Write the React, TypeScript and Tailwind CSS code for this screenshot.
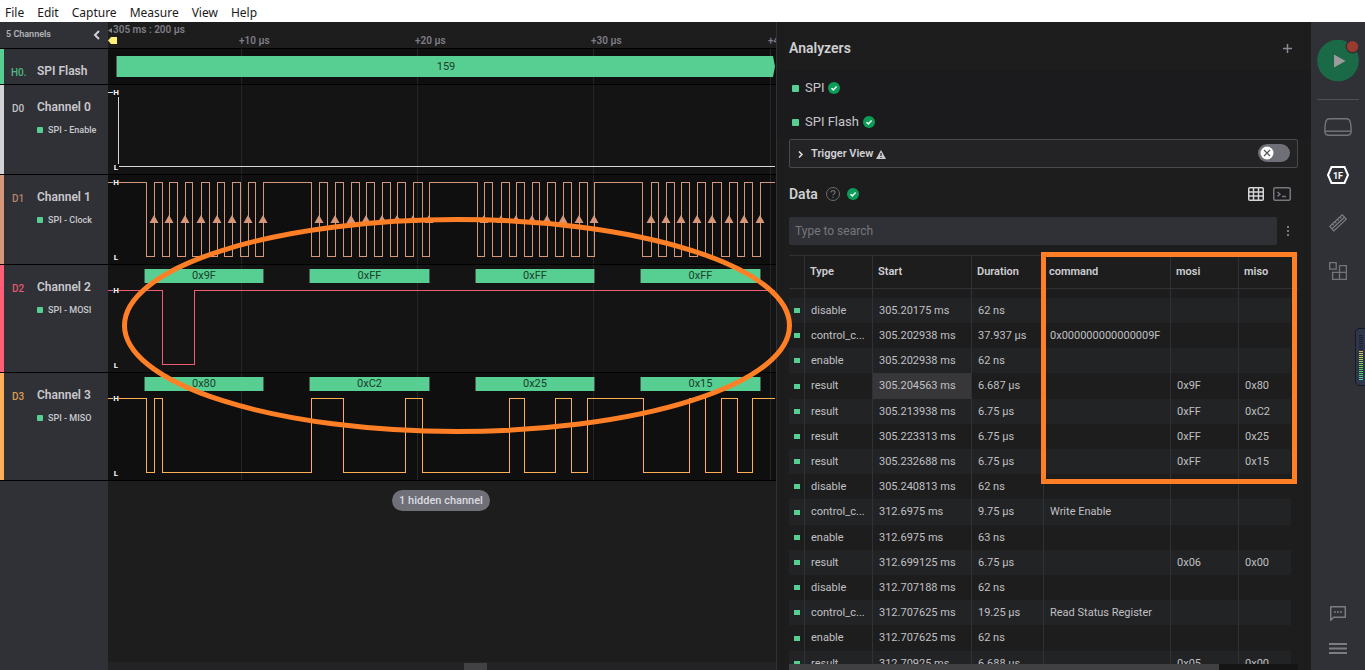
import { useState } from 'react'
import type { ReactNode } from 'react'
import clsx from 'clsx'

type Frame = { from: number; to: number; label: string }

type Channel = {
  id: string
  name: string
  signal: string
  row: string
  stripe: string
  idColor: string
  stroke: string
  high: number
  edges: number[]
  frames?: string[]
  arrows?: boolean
}

// Signals idle high, so every even edge is a fall and every odd edge a rise
const CLOCK = [
  38, 46, 54, 61, 69, 77, 84, 93, 101, 109, 116, 124, 132, 140, 147, 155,
  203, 211, 219, 227, 235, 243, 251, 258, 266, 274, 282, 289, 297, 305, 314, 321,
  369, 376, 384, 393, 401, 408, 416, 424, 431, 439, 447, 455, 463, 471, 479, 486,
  534, 543, 550, 558, 566, 573, 581, 589, 597, 604, 613, 621, 629, 636, 644, 652,
]

const MISO = [
  38, 46, 54, 203, 235, 297, 314, 401, 416, 447, 463, 479, 535, 581, 597, 613, 629, 644,
]

const FRAME_SPANS = [
  [37, 155],
  [202, 321],
  [368, 486],
  [533, 652],
]

const TICKS = [
  { x: 133, label: '+10 µs' },
  { x: 309, label: '+20 µs' },
  { x: 485, label: '+30 µs' },
  { x: 662, label: '+4' },
]

const channels: Channel[] = [
  {
    id: 'D0',
    name: 'Channel 0',
    signal: 'SPI - Enable',
    row: 'h-[90px] bg-[#141414]',
    stripe: 'bg-[#d3d3d5]',
    idColor: 'text-[#c4c4c8]',
    stroke: '#d8d8d8',
    high: 7,
    edges: [10],
  },
  {
    id: 'D1',
    name: 'Channel 1',
    signal: 'SPI - Clock',
    row: 'h-[90px] bg-[#0f0f0f]',
    stripe: 'bg-[#d6967a]',
    idColor: 'text-[#b9836c]',
    stroke: '#d6967a',
    high: 7,
    edges: CLOCK,
    arrows: true,
  },
  {
    id: 'D2',
    name: 'Channel 2',
    signal: 'SPI - MOSI',
    row: 'h-[108px] bg-[#141414]',
    stripe: 'bg-[#ff5f77]',
    idColor: 'text-[#e0596d]',
    stroke: '#f25c72',
    high: 25,
    edges: [54, 86],
    frames: ['0x9F', '0xFF', '0xFF', '0xFF'],
  },
  {
    id: 'D3',
    name: 'Channel 3',
    signal: 'SPI - MISO',
    row: 'h-[108px] bg-[#0f0f0f]',
    stripe: 'bg-[#ffb056]',
    idColor: 'text-[#dd9b50]',
    stroke: '#ffb056',
    high: 25,
    edges: MISO,
    frames: ['0x80', '0xC2', '0x25', '0x15'],
  },
]

const rows = [
  ['disable', '305.20175 ms', '62 ns', '', '', ''],
  ['control_c...', '305.202938 ms', '37.937 µs', '0x000000000000009F', '', ''],
  ['enable', '305.202938 ms', '62 ns', '', '', ''],
  ['result', '305.204563 ms', '6.687 µs', '', '0x9F', '0x80'],
  ['result', '305.213938 ms', '6.75 µs', '', '0xFF', '0xC2'],
  ['result', '305.223313 ms', '6.75 µs', '', '0xFF', '0x25'],
  ['result', '305.232688 ms', '6.75 µs', '', '0xFF', '0x15'],
  ['disable', '305.240813 ms', '62 ns', '', '', ''],
  ['control_c...', '312.6975 ms', '9.75 µs', 'Write Enable', '', ''],
  ['enable', '312.6975 ms', '63 ns', '', '', ''],
  ['result', '312.699125 ms', '6.75 µs', '', '0x06', '0x00'],
  ['disable', '312.707188 ms', '62 ns', '', '', ''],
  ['control_c...', '312.707625 ms', '19.25 µs', 'Read Status Register', '', ''],
  ['enable', '312.707625 ms', '62 ns', '', '', ''],
  ['result', '312.70925 ms', '6.688 µs', '', '0x05', '0x00'],
]

function wavePath(edges: number[], high: number) {
  const low = high + 74
  let d = `M0 ${high + 0.5}`
  edges.forEach((x, i) => {
    d += `H${x + 0.5}V${(i % 2 === 0 ? low : high) + 0.5}`
  })
  return d + 'H2000'
}

function MenuBar() {
  return (
    <header className="flex h-[22px] shrink-0 items-center gap-[13px] bg-white pt-1 pl-[5px] font-['Noto_Sans',sans-serif] text-[12px] text-[#1a1a1a]">
      {['File', 'Edit', 'Capture', 'Measure', 'View', 'Help'].map((item) => (
        <button key={item} type="button">
          {item}
        </button>
      ))}
    </header>
  )
}

function GridLines() {
  return (
    <>
      {TICKS.map(({ x }) => (
        <line key={x} x1={x + 0.5} x2={x + 0.5} y1="0" y2="120" stroke="#262628" />
      ))}
    </>
  )
}

function Decoded({ from, to, label }: Frame) {
  return (
    <div
      className="absolute top-1 h-3.5 border-x border-[#4a5a52] bg-[#57cf92] text-center text-[11px] leading-[14px] text-[#1b3d2b]"
      style={{ left: from - 1, width: to - from + 2 }}
    >
      {label}
    </div>
  )
}

function Level({ children, top }: { children: ReactNode; top: number }) {
  return (
    <span
      className="absolute left-[5px] w-1.5 bg-[#111] text-center text-[8px] leading-[8px] font-bold text-white"
      style={{ top }}
    >
      {children}
    </span>
  )
}

function Track({ channel }: { channel: Channel }) {
  const { edges, high, stroke, frames, arrows } = channel
  return (
    <div className="relative mr-px min-w-0 flex-1 overflow-hidden">
      <svg className="h-full w-full" shapeRendering="crispEdges">
        <GridLines />
        <path d={wavePath(edges, high)} fill="none" stroke={stroke} />
        {arrows &&
          edges
            .filter((_, i) => i % 2 === 1)
            .map((x) => (
              <path key={x} d={`M${x} 40l4.500 8h-9z`} fill={stroke} shapeRendering="auto" />
            ))}
      </svg>
      {frames?.map((label, i) => (
        <Decoded key={i} from={FRAME_SPANS[i][0]} to={FRAME_SPANS[i][1]} label={label} />
      ))}
      <Level top={high - 3}>H</Level>
      <Level top={high + 72}>L</Level>
    </div>
  )
}

function ChannelRow({ channel }: { channel: Channel }) {
  return (
    <div className={clsx('flex border-b border-black', channel.row)}>
      <div className="flex w-[108px] shrink-0 bg-[#303136]">
        <div className={clsx('w-1', channel.stripe)} />
        <div className={clsx('w-[33px] pt-[16px] pl-2 text-[10px] leading-4 font-medium', channel.idColor)}>
          {channel.id}
        </div>
        <div className="pt-[14px]">
          <div className="text-[12px] leading-4 font-semibold text-[#c9c9cd]">{channel.name}</div>
          <div className="mt-[7px] flex items-center gap-[5px] text-[9px] leading-4 font-medium whitespace-nowrap text-[#c9c9cd]">
            <span className="size-1.5 rounded-[1px] bg-[#57cf92]" />
            {channel.signal}
          </div>
        </div>
      </div>
      <Track channel={channel} />
    </div>
  )
}

function Waveforms() {
  return (
    <section className="flex min-w-0 flex-1 flex-col border-r border-[#303136]">
      {/* Time ruler */}
      <div className="flex h-[27px] shrink-0 border-b border-black">
        <div className="flex w-[108px] shrink-0 items-center justify-between bg-[#303136] pr-2 pl-1.5 text-[9px] font-semibold text-[#b4b4b9]">
          5 Channels
          <button type="button" aria-label="Collapse channels">
            <svg width="7" height="10" fill="none" stroke="#d0d0d4" strokeWidth="2">
              <path d="M6 1L2 5l4 4" />
            </svg>
          </button>
        </div>
        <div className="relative min-w-0 flex-1 overflow-hidden text-[10px] leading-3 font-semibold whitespace-nowrap text-[#7d7d86]">
          <div className="flex items-center gap-px pt-0.5">
            <svg width="4" height="5" fill="#85858d">
              <path d="M4 0v5L0 2.5z" />
            </svg>
            305 ms : 200 µs
          </div>
          <svg className="absolute top-[15px] left-0" width="9" height="7" fill="#fff07a">
            <path d="M3 0h6v7H3L0 3.5z" />
          </svg>
          {TICKS.map(({ x, label }) => (
            <span key={x} className="absolute top-[13px]" style={{ left: x - 2 }}>
              {label}
            </span>
          ))}
        </div>
      </div>

      {/* High level analyzer */}
      <div className="flex h-9 shrink-0 border-b border-black bg-[#0f0f0f]">
        <div className="flex w-[108px] shrink-0 bg-[#303136] leading-4">
          <div className="w-1 bg-[#57cf92]" />
          <div className="w-[33px] pt-4 pl-[7px] text-[10px] font-medium text-[#4db982]">H0.</div>
          <div className="pt-3.5 text-[12px] font-semibold text-[#c9c9cd]">SPI Flash</div>
        </div>
        <div className="relative min-w-0 flex-1 pt-[7px] pr-px pl-2">
          <svg className="absolute inset-0 h-full w-full" shapeRendering="crispEdges">
            <GridLines />
          </svg>
          <div className="relative h-[21px] border-l border-[#55555a] bg-[#57cf92] text-center text-[11px] leading-[21px] text-[#1b3d2b] [clip-path:polygon(0_0,calc(100%-2px)_0,100%_50%,calc(100%-2px)_100%,0_100%)]">
            159
          </div>
        </div>
      </div>

      {channels.map((channel) => (
        <ChannelRow key={channel.id} channel={channel} />
      ))}

      <div className="flex flex-1">
        <div className="w-[108px] shrink-0 bg-[#303136]" />
        <div className="flex min-w-0 flex-1 flex-col items-center justify-between pt-[9px]">
          <button
            type="button"
            className="mr-0.5 h-[21px] rounded-full bg-[#6f6f77] px-[7px] text-[11px] leading-[19px] font-medium text-[#dcdce0]"
          >
            1 hidden channel
          </button>
          <div className="flex h-2 w-full bg-[#232325] pt-px">
            <div className="ml-[53.3%] w-[23px] bg-[#424244]" />
          </div>
        </div>
      </div>
    </section>
  )
}

function CheckBadge() {
  return (
    <svg width="12" height="12" viewBox="0 0 12 12">
      <circle cx="6" cy="6" r="6" fill="#0a9d58" />
      <path d="M3.5 6.2l1.8 1.7 3.3-3.4" fill="none" stroke="#fff" strokeWidth="1.5" />
    </svg>
  )
}

function AnalyzerItem({ name }: { name: string }) {
  return (
    <li className="flex h-[34px] items-center pl-[15px] text-[13px] text-[#c6c6ca]">
      <span className="size-[7px] rounded-[1px] bg-[#57cf92]" />
      <span className="mr-1 ml-1.5">{name}</span>
      <CheckBadge />
    </li>
  )
}

function DataTable() {
  return (
    <div className="relative mx-3 mt-2.5 mr-[13px] flex min-h-0 flex-1 flex-col border-t border-[#303136]">
      <div className="min-h-0 flex-1 overflow-hidden">
        <table className="w-full table-fixed border-separate border-spacing-0 text-left text-[11px] leading-4 whitespace-nowrap text-[#c0c0c4]">
          <colgroup>
            <col className="w-[15px]" />
            <col className="w-[68px]" />
            <col className="w-[99px]" />
            <col className="w-[72px]" />
            <col />
            <col className="w-[68px]" />
            <col className="w-[53px]" />
            <col className="w-[7px]" />
          </colgroup>
          <thead>
            <tr className="h-[33px] text-[#cfcfd3]">
              <th className="border-b border-[#303136]" />
              {['Type', 'Start', 'Duration', 'command', 'mosi', 'miso'].map((title) => (
                <th key={title} className="border-b border-l border-[#303136] pl-[5px] font-semibold">
                  {title}
                </th>
              ))}
              <th className="border-b border-[#303136]" />
            </tr>
          </thead>
          <tbody>
            <tr className="h-[9px]">
              <td />
              {rows[0].map((_, i) => (
                <td key={i} className="border-l border-[#303136]" />
              ))}
              <td />
            </tr>
            {rows.map((cells, r) => {
              const shade = r % 2 === 0 ? 'bg-[#222324]' : ''
              return (
                <tr key={r} className={r % 5 === 3 ? 'h-[26px]' : 'h-[25px]'}>
                  <td className={shade}>
                    <span className="ml-[5px] block h-[5px] w-1.5 bg-[#57cf92]" />
                  </td>
                  {cells.map((text, c) => (
                    <td
                      key={c}
                      className={clsx(
                        'border-l border-[#303136] pl-1.5',
                        r === 3 && c === 1 ? 'bg-[#37373a]' : shade
                      )}
                    >
                      {text}
                    </td>
                  ))}
                  <td />
                </tr>
              )
            })}
          </tbody>
        </table>
      </div>
      <div className="h-1.5 shrink-0 bg-[#151515]">
        <div className="h-full w-[84.5%] bg-[#404042]" />
      </div>
      {/* Highlight over the decoded columns */}
      <div className="pointer-events-none absolute -top-1 right-px h-[232px] w-[256px] border-5 border-[#ff7f27]" />
    </div>
  )
}

function AnalyzersPanel() {
  const [trigger, setTrigger] = useState(false)
  const [query, setQuery] = useState('')

  return (
    <section className="flex w-[534px] shrink-0 flex-col">
      <div className="flex h-12 shrink-0 items-center justify-between pt-1 pr-[19px] pl-3">
        <h2 className="text-[14px] font-semibold text-[#cfcfd3]">Analyzers</h2>
        <button type="button" aria-label="Add analyzer">
          <svg width="9" height="9" stroke="#8b8b93" strokeWidth="1.5">
            <path d="M4.5 0v9M0 4.5h9" />
          </svg>
        </button>
      </div>

      <ul className="bg-[#1b1b1d] pt-px">
        <AnalyzerItem name="SPI" />
        <AnalyzerItem name="SPI Flash" />
      </ul>

      <div className="mr-[13px] ml-3 flex h-[29px] shrink-0 items-center rounded-xs border border-[#4a4a4e] bg-[#232325] pr-[7px] pl-2">
        <button type="button" className="flex items-center pt-px text-[11px] font-semibold text-[#d2d2d6]">
          <svg className="mr-2" width="5" height="7" fill="none" stroke="#e4e4e6" strokeWidth="1.5">
            <path d="M1 .5l3 3-3 3" />
          </svg>
          Trigger View
          <svg className="ml-[3px]" width="10" height="9" viewBox="0 0 10 9">
            <path d="M5 0l5 9H0z" fill="#c9c9cd" />
            <path d="M5 3v3M5 7v1" stroke="#232325" strokeWidth="1.2" />
          </svg>
        </button>
        <label className="relative mb-0.5 ml-auto block h-[18px] w-8">
          <input
            type="checkbox"
            role="switch"
            aria-label="Trigger View"
            checked={trigger}
            onChange={(e) => setTrigger(e.target.checked)}
            className="block h-full w-full appearance-none rounded-full bg-[#6f6f77]"
          />
          <svg
            className={clsx('pointer-events-none absolute top-0.5', trigger ? 'right-0.5' : 'left-0.5')}
            width="14"
            height="14"
          >
            <circle cx="7" cy="7" r="6.5" fill="#fff" />
            <path d="M4 4l6 6M10 4l-6 6" stroke="#55555c" strokeWidth="1.2" />
          </svg>
        </label>
      </div>

      <div className="flex h-[49px] shrink-0 items-center pt-[3px] pr-5 pl-3">
        <h2 className="text-[14px] font-semibold text-[#cfcfd3]">Data</h2>
        <svg className="ml-2" width="14" height="14" fill="none" stroke="#6d6d74">
          <circle cx="7" cy="7" r="6.5" />
          <path d="M5 5.6c0-2.8 4-2.6 4-.2 0 1.5-2 1.5-2 3.1M7 9.7v1.2" strokeWidth="1.2" />
        </svg>
        <div className="ml-[7px]">
          <CheckBadge />
        </div>
        <button type="button" aria-label="Table view" className="ml-auto">
          <svg width="16" height="14" fill="none" stroke="#d6d6d9" strokeWidth="1.5">
            <rect x=".75" y=".75" width="14.5" height="12.5" rx="1" />
            <path d="M5.5 1v12M10.5 1v12M1 5h14M1 9h14" />
          </svg>
        </button>
        <button type="button" aria-label="Terminal view" className="ml-[9px]">
          <svg width="18" height="14" fill="none" stroke="#77777f" strokeWidth="1.5">
            <rect x=".75" y=".75" width="16.5" height="12.5" rx="1.5" />
            <path d="M4.5 5l2.5 2.2L4.5 9.4M9 9.5h4" />
          </svg>
        </button>
      </div>

      <div className="flex shrink-0 items-center pr-[21px] pl-3">
        <input
          type="text"
          aria-label="Search data"
          placeholder="Type to search"
          value={query}
          onChange={(e) => setQuery(e.target.value)}
          className="h-7 min-w-0 flex-1 rounded-xs bg-[#303136] px-1.5 text-[12px] text-[#cfcfd3] placeholder:text-[#76767c]"
        />
        <button type="button" aria-label="More options" className="ml-[9px]">
          <svg width="4" height="12" fill="#9a9aa2">
            <circle cx="2" cy="2" r="1" />
            <circle cx="2" cy="6" r="1" />
            <circle cx="2" cy="10" r="1" />
          </svg>
        </button>
      </div>

      <DataTable />
    </section>
  )
}

function Toolbar() {
  return (
    <aside className="relative flex w-[54px] shrink-0 flex-col items-center bg-[#303136] pt-[18px] pb-4">
      <button type="button" aria-label="Start capture">
        <svg width="42" height="42">
          <circle cx="21" cy="20.5" r="20.8" fill="#1b6a47" />
          <path d="M17 14.5v13l11.5-6.5z" fill="#9b9b9b" />
          <circle cx="35.5" cy="6.5" r="7" fill="#303136" />
          <circle cx="35.5" cy="6.5" r="5.6" fill="#9b3a2f" />
        </svg>
      </button>
      <div className="mt-[17px] h-px w-[42px] bg-[#505056]" />
      <nav className="mt-[18px] flex flex-col items-center gap-[30px]">
        <button type="button" aria-label="Device">
          <svg width="28" height="18" fill="none" stroke="#74747b" strokeWidth="1.4">
            <path d="M5.5.7h17c2 0 3.2 1 3.7 3 .8 3.2 1 6 1 9.3 0 2.8-1.5 4.3-4.2 4.3H5c-2.7 0-4.2-1.5-4.2-4.3 0-3.3.2-6.100 1-9.300.5-2 1.700-3 3.700-3z" />
            <path d="M.9 13.2h26.2" />
          </svg>
        </button>
        <button type="button" aria-label="Analyzers">
          <svg width="22" height="18" fill="none" stroke="#fff" strokeWidth="2">
            <path d="M4.5 1h13L21 9l-3.5 8h-13L1 9z" />
            <text
              x="11"
              y="12.5"
              textAnchor="middle"
              fill="#fff"
              stroke="none"
              className="text-[9px] font-bold"
            >
              1F
            </text>
          </svg>
        </button>
        <button type="button" aria-label="Measurements">
          <svg width="18" height="18" fill="none" stroke="#7d7d84" strokeWidth="1.2">
            <path d="M.7 12.5L13.2.8l4.1 4.4L4.800 17z" />
            <path d="M2.800 15L15.5 3.2M3.5 10l1.3 1.4M6 7.7l1.3 1.4M8.5 5.3l1.3 1.4M11 3l1.3 1.4" />
          </svg>
        </button>
        <button type="button" aria-label="Extensions">
          <svg width="18" height="18" fill="none" stroke="#74747b" strokeWidth="1.3">
            <path d="M.7.7h6.5v6.5H.7zM10.5 3.6h6.9v13.8H3.6v-7h13.8M10.5 3.6v13.8" />
          </svg>
        </button>
      </nav>
      <div className="mt-auto flex flex-col items-center gap-[21px]">
        <button type="button" aria-label="Feedback">
          <svg width="16" height="16" fill="none" stroke="#7c7c82" strokeWidth="1.5">
            <path d="M.7 14.2V.7h14.6v10.6H3.7z" strokeLinejoin="round" />
            <path d="M4 6h2M7 6h2M10 6h2" />
          </svg>
        </button>
        <button type="button" aria-label="Menu">
          <svg width="18" height="11" stroke="#7c7c82" strokeWidth="2">
            <path d="M0 1h18M0 5.5h18M0 10h18" />
          </svg>
        </button>
      </div>

      {/* Level meter docked at the window edge */}
      <svg className="absolute top-[306px] right-0" width="10" height="58" shapeRendering="crispEdges">
        <path d="M10 .5H3.5l-3 3v51l3 3H10" fill="#2f3649" stroke="#141a26" />
        {Array.from({ length: 23 }, (_, i) => (
          <rect
            key={i}
            x="4"
            y={7 + i * 2}
            width="4"
            height="1"
            fill={i < 8 ? '#1c2230' : `hsl(${48 + (i - 8) * 8}, 60%, 58%)`}
          />
        ))}
      </svg>
    </aside>
  )
}

export default function App() {
  return (
    <div className="relative flex h-screen flex-col overflow-hidden bg-[#1d1d1d] font-[Roboto,sans-serif]">
      <MenuBar />
      <main className="flex min-h-0 flex-1">
        <Waveforms />
        <AnalyzersPanel />
        <Toolbar />
      </main>
      {/* Highlight over the decoded bytes */}
      <svg
        className="pointer-events-none absolute top-[217px] left-[122px]"
        width="671"
        height="217"
        fill="none"
      >
        <ellipse cx="335" cy="108.5" rx="332.5" ry="106" stroke="#ff7f27" strokeWidth="5" />
      </svg>
    </div>
  )
}
